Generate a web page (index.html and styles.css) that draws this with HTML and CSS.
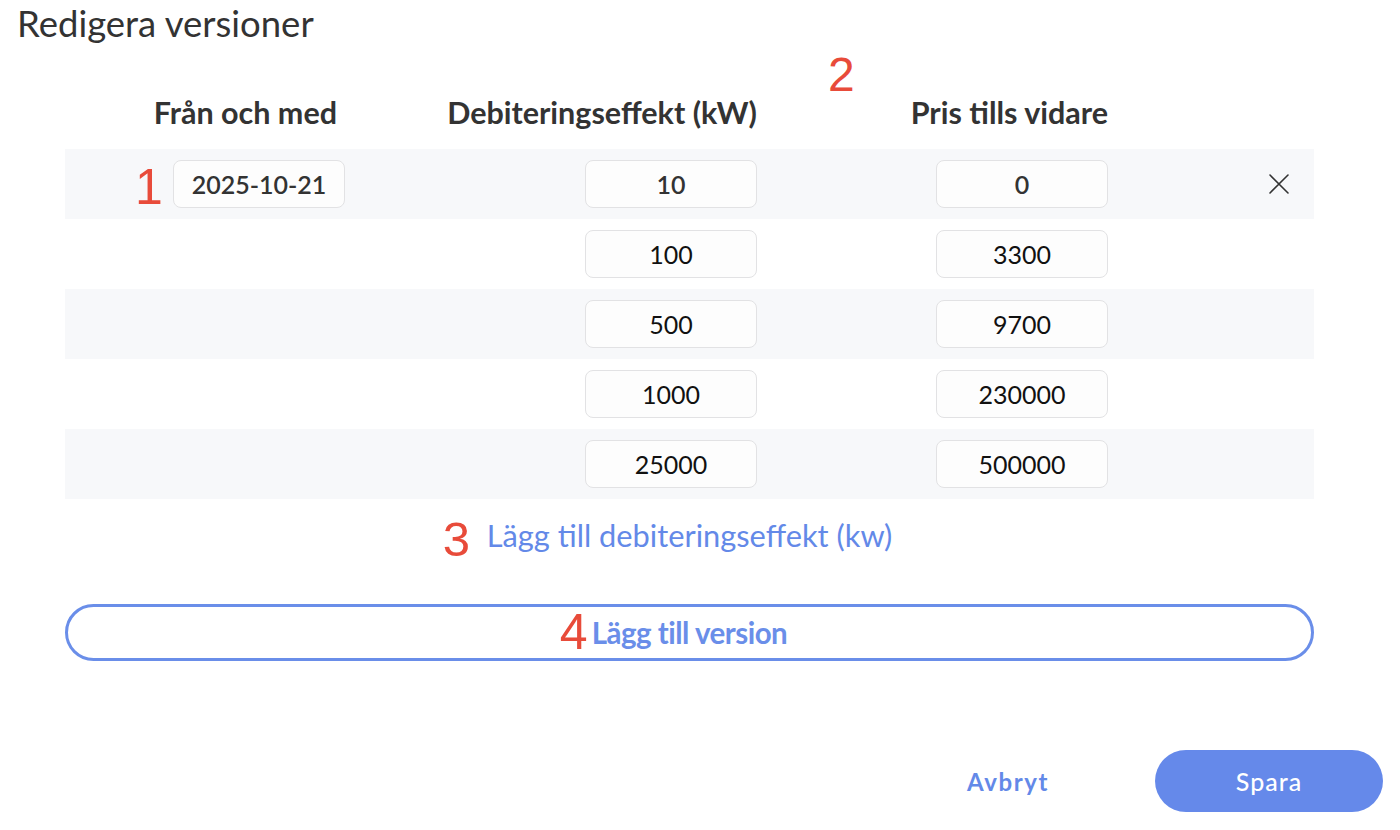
FILE: index.html
```html
<!DOCTYPE html>
<html lang="sv">
<head>
<meta charset="utf-8">
<title>Redigera versioner</title>
<link rel="stylesheet" href="styles.css">
</head>
<body>
<div class="dialog">
  <h1 class="title">Redigera versioner</h1>

  <div class="table">
    <div class="head">
      <div class="hcell hcell-date">Från och med</div>
      <div class="hcell">Debiteringseffekt (kW)</div>
      <div class="hcell hcell-price"><span class="mark mark-2">2</span>Pris tills vidare</div>
      <div class="hcell"></div>
    </div>

    <div class="row alt">
      <div class="cell cell-date"><span class="mark mark-1">1</span><input class="field field-strong" value="2025-10-21"></div>
      <div class="cell"><input class="field field-strong" value="10"></div>
      <div class="cell"><input class="field field-strong" value="0"></div>
      <div class="cell cell-x">
        <svg class="x-icon" width="22" height="22" viewBox="0 0 22 22" aria-hidden="true"><path d="M2 2 L20 20 M20 2 L2 20" stroke="#333" stroke-width="1.6" fill="none" stroke-linecap="round"/></svg>
      </div>
    </div>
    <div class="row">
      <div class="cell cell-date"></div>
      <div class="cell"><input class="field" value="100"></div>
      <div class="cell"><input class="field" value="3300"></div>
      <div class="cell cell-x"></div>
    </div>
    <div class="row alt">
      <div class="cell cell-date"></div>
      <div class="cell"><input class="field" value="500"></div>
      <div class="cell"><input class="field" value="9700"></div>
      <div class="cell cell-x"></div>
    </div>
    <div class="row">
      <div class="cell cell-date"></div>
      <div class="cell"><input class="field" value="1000"></div>
      <div class="cell"><input class="field" value="230000"></div>
      <div class="cell cell-x"></div>
    </div>
    <div class="row alt">
      <div class="cell cell-date"></div>
      <div class="cell"><input class="field" value="25000"></div>
      <div class="cell"><input class="field" value="500000"></div>
      <div class="cell cell-x"></div>
    </div>

    <div class="add-row">
      <a class="add-link" href="#"><span class="mark mark-3">3</span>Lägg till debiteringseffekt (kw)</a>
    </div>

    <button class="add-version" type="button"><span class="av-label"><span class="mark mark-4">4</span>Lägg till version</span></button>
  </div>

  <div class="footer">
    <button class="btn-cancel" type="button">Avbryt</button>
    <button class="btn-save" type="button">Spara</button>
  </div>
</div>
</body>
</html>
```

FILE: styles.css
```css
* { box-sizing: border-box; }

html, body {
  margin: 0;
  padding: 0;
  background: #ffffff;
}

body {
  font-family: Lato, "Noto Sans", sans-serif;
  color: #333333;
  width: 1400px;
  height: 830px;
  overflow: hidden;
}

.dialog {
  padding: 0 17px 0 17px;
}

.title {
  margin: 0;
  padding-top: 1px;
  font-size: 36.5px;
  line-height: 44px;
  font-weight: 400;
  color: #333333;
}

.table {
  margin: 0 69px 0 48px;
}

.head,
.row {
  display: grid;
  grid-template-columns: 280px 412px 351px 206px;
}

.head {
  margin-top: 48px;
  padding-bottom: 18px;
}

.hcell {
  position: relative;
  font-size: 30.5px;
  font-weight: 700;
  line-height: 38px;
  color: #333333;
  text-align: right;
}

.hcell-date {
  padding-right: 8px;
}

.row {
  height: 70px;
}

.row.alt {
  background: #f7f8fa;
}

.cell {
  position: relative;
  display: flex;
  align-items: center;
  justify-content: flex-end;
}

.cell-x {
  padding-right: 24px;
}

.field {
  width: 172px;
  height: 48px;
  border: 1px solid #e2e2e4;
  border-radius: 8px;
  background: #fdfdfd;
  font-family: Lato, "Noto Sans", sans-serif;
  font-size: 25px;
  font-weight: 400;
  color: #111111;
  text-align: center;
  padding: 0 6px;
  outline: none;
}

.field-strong {
  font-weight: 600;
  color: #333333;
}

.x-icon {
  display: block;
}

.mark {
  position: absolute;
  font-family: "Liberation Sans", Arial, sans-serif;
  font-weight: 400;
  color: #e84b3a;
  font-size: 50px;
  line-height: 1;
}

.mark-1 {
  left: 70px;
  top: 13px;
}

.mark-2 {
  left: 71px;
  top: -42px;
  font-size: 48px;
}

.mark-3 {
  left: -44px;
  top: -2px;
  font-size: 49px;
}

.mark-4 {
  left: -32px;
  top: -9px;
}

.add-row {
  display: flex;
  justify-content: center;
  padding-top: 18px;
  height: 105px;
}

.add-link {
  position: relative;
  font-size: 30.8px;
  line-height: 38px;
  color: #6389e8;
  text-decoration: none;
}

.add-version {
  display: flex;
  justify-content: center;
  align-items: center;
  width: 100%;
  height: 57px;
  border: 3px solid #6a8ee9;
  border-radius: 29px;
  background: #ffffff;
  padding: 0;
  cursor: pointer;
}

.av-label {
  position: relative;
  font-family: Lato, "Noto Sans", sans-serif;
  font-size: 29.5px;
  font-weight: 700;
  letter-spacing: -0.5px;
  color: #6a8ee9;
  line-height: 34px;
}

.footer {
  display: flex;
  justify-content: flex-end;
  align-items: center;
  margin-top: 89px;
  gap: 66px;
}

.btn-cancel {
  border: none;
  background: transparent;
  font-family: Lato, "Noto Sans", sans-serif;
  font-size: 24px;
  font-weight: 700;
  letter-spacing: 1.6px;
  color: #6389e8;
  padding: 0 40px;
  height: 62px;
  cursor: pointer;
}

.btn-save {
  width: 228px;
  height: 62px;
  border: none;
  border-radius: 31px;
  background: #6589ea;
  color: #ffffff;
  font-family: Lato, "Noto Sans", sans-serif;
  font-size: 25px;
  font-weight: 500;
  letter-spacing: 1px;
  cursor: pointer;
}
```
